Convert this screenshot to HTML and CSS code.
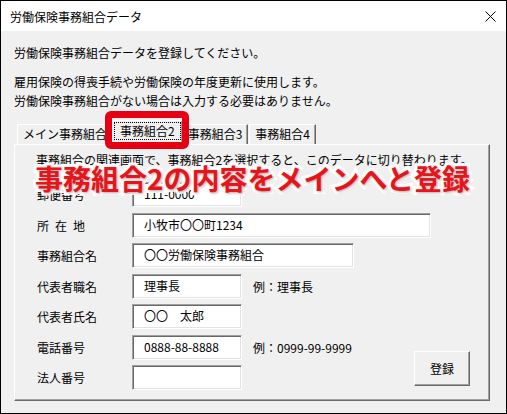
FILE: index.html
```html
<!DOCTYPE html>
<html lang="ja">
<head>
<meta charset="utf-8">
<title>労働保険事務組合データ</title>
<link rel="stylesheet" href="styles.css">
</head>
<body>
<div class="window">
  <div class="titlebar">
    <span class="title">労働保険事務組合データ</span>
    <svg class="close" width="11" height="11" viewBox="0 0 11 11"><path d="M0.5 0.5L10.5 10.5M10.5 0.5L0.5 10.5" stroke="#000" stroke-width="1" fill="none"/></svg>
  </div>
  <div class="body">
    <p class="intro">労働保険事務組合データを登録してください。</p>
    <p class="desc">雇用保険の得喪手続や労働保険の年度更新に使用します。<br>労働保険事務組合がない場合は入力する必要はありません。</p>
    <div class="tabs">
      <div class="tab">メイン事務組合</div>
      <div class="tab selected"><span class="focus">事務組合2</span></div>
      <div class="tab">事務組合3</div>
      <div class="tab">事務組合4</div>
    </div>
    <div class="panel">
      <p class="notice">事務組合の関連画面で、事務組合2を選択すると、このデータに切り替わります。</p>
      <div class="form">
        <div class="row"><span class="label">郵便番号</span><div class="field w-s">111-0000</div></div>
        <div class="row"><span class="label">所&ensp;在&ensp;地</span><div class="field w-l">小牧市〇〇町1234</div></div>
        <div class="row"><span class="label">事務組合名</span><div class="field w-m">〇〇労働保険事務組合</div></div>
        <div class="row"><span class="label">代表者職名</span><div class="field w-s">理事長</div><span class="example">例：理事長</span></div>
        <div class="row"><span class="label">代表者氏名</span><div class="field w-s">〇〇　太郎</div></div>
        <div class="bottom">
          <div class="rows">
            <div class="row"><span class="label">電話番号</span><div class="field w-s">0888-88-8888</div><span class="example">例：0999-99-9999</span></div>
            <div class="row"><span class="label">法人番号</span><div class="field w-s"></div></div>
          </div>
          <button class="btn">登録</button>
        </div>
      </div>
    </div>
  </div>
  <div class="highlight"></div>
  <div class="callout">事務組合2の内容をメインへと登録</div>
</div>
</body>
</html>
```
FILE: styles.css
```css
* { box-sizing: border-box; }
html, body {
  margin: 0;
  padding: 0;
  width: 507px;
  height: 414px;
  overflow: hidden;
  background: #f0f0f0;
}
body {
  font-family: "Noto Sans CJK JP", "Noto Sans", sans-serif;
  font-size: 12px;
  color: #000;
}
.window {
  position: relative;
  width: 507px;
  height: 414px;
  border: 1px solid #000;
  display: flex;
  flex-direction: column;
  background: #f0f0f0;
}
.titlebar {
  height: 30px;
  flex: none;
  background: #fff;
  display: flex;
  align-items: center;
  justify-content: space-between;
  padding: 0 10px 0 9px;
}
.title {
  line-height: 19px;
}
.close {
  display: block;
  margin-top: 1px;
}
.body {
  flex: 1;
  padding: 12px 16px 12px 13px;
  display: flex;
  flex-direction: column;
}
.intro, .desc, .notice {
  margin: 0;
  line-height: 19px;
  white-space: nowrap;
}
.desc {
  margin-top: 10px;
}
.tabs {
  margin-top: 10px;
  display: flex;
  align-items: flex-end;
  padding-left: 3px;
  height: 24px;
}
.tab {
  height: 20px;
  padding: 0 5px 2px;
  line-height: 17px;
  border-top: 1px solid #fff;
  border-left: 1px solid #fff;
  border-right: 1px solid #696969;
  box-shadow: inset -1px 0 0 #a0a0a0;
  margin-right: 1px;
  white-space: nowrap;
}
.tab.selected {
  position: relative;
  z-index: 1;
  height: 25px;
  margin: 0 -1px -1px -2px;
  padding: 1px 1px 5px;
  background: #f0f0f0;
}
.focus {
  display: block;
  height: 18px;
  line-height: 16px;
  padding: 0 5px;
  border: 1px dotted #000;
}
.panel {
  height: 257px;
  flex: none;
  border-top: 1px solid #fff;
  border-left: 1px solid #fff;
  border-right: 1px solid #696969;
  border-bottom: 1px solid #696969;
  box-shadow: inset -1px -1px 0 #a0a0a0;
  padding: 5px 19px 0 21px;
}
.form {
  margin-top: 13px;
  display: flex;
  flex-direction: column;
  gap: 5.5px;
}
.rows {
  display: flex;
  flex-direction: column;
  gap: 5.5px;
}
.row {
  display: flex;
  align-items: center;
  height: 25px;
}
.label {
  width: 96px;
  padding-left: 1px;
  flex: none;
  line-height: 19px;
  white-space: nowrap;
}
.field {
  height: 25px;
  background: #fff;
  border-top: 1px solid #a0a0a0;
  border-left: 1px solid #a0a0a0;
  border-bottom: 1px solid #fff;
  border-right: 1px solid #fff;
  box-shadow: inset 1px 1px 0 #696969, inset -1px -1px 0 #e3e3e3;
  padding-left: 11px;
  line-height: 22px;
  white-space: nowrap;
  flex: none;
}
.w-s { width: 110px; }
.w-m { width: 222px; }
.w-l { width: 299px; }
.example {
  margin-left: 11px;
  line-height: 19px;
  white-space: nowrap;
}
.bottom {
  display: flex;
}
.btn {
  margin-left: auto;
  align-self: flex-end;
  margin-bottom: 4px;
  width: 56px;
  height: 35px;
  font-family: inherit;
  font-size: 12px;
  color: #000;
  background: #f0f0f0;
  border-top: 1px solid #fff;
  border-left: 1px solid #fff;
  border-right: 1px solid #696969;
  border-bottom: 1px solid #696969;
  box-shadow: inset -1px -1px 0 #a0a0a0;
  padding: 0;
  line-height: 19px;
}
.highlight {
  position: absolute;
  left: 104px;
  top: 110px;
  width: 84px;
  height: 38px;
  border: 7px solid #e60012;
  border-radius: 6px;
  z-index: 2;
}
.callout {
  position: absolute;
  left: 34px;
  top: 163px;
  font-size: 28px;
  line-height: 28px;
  font-weight: 700;
  color: #e8141c;
  white-space: nowrap;
  -webkit-text-stroke: 6px #fff;
  paint-order: stroke fill;
  text-shadow: 1px 1px 3px rgba(0, 0, 0, 0.35);
  z-index: 3;
}
```
